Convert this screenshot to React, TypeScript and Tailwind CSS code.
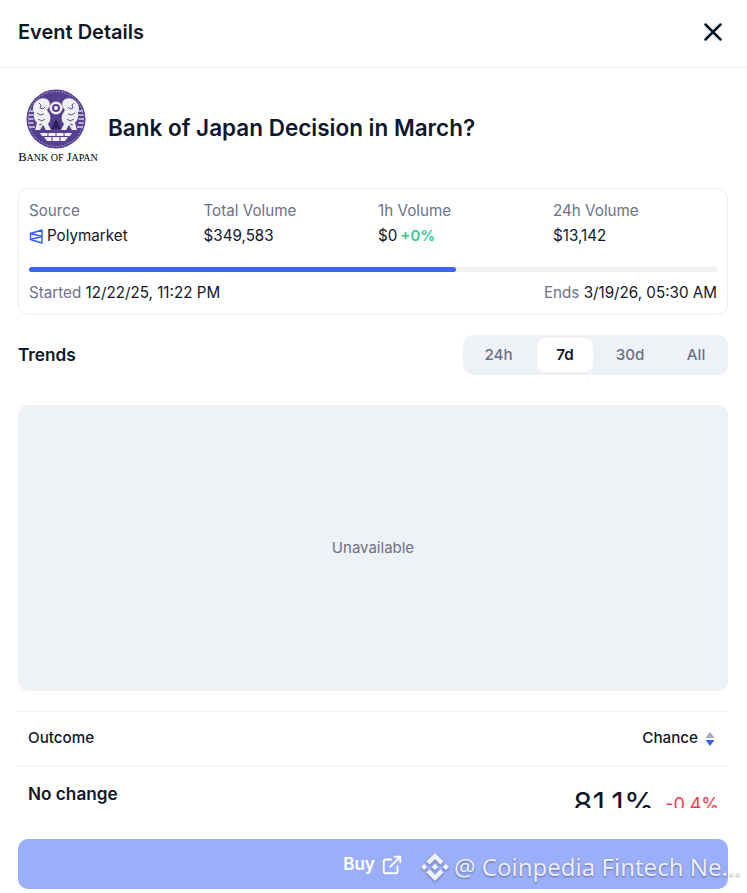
import { ExternalLink, X } from 'lucide-react';

const stats = [
    { label: 'Total Volume', value: '$349,583' },
    { label: '1h Volume', value: '$0', change: '+0%' },
    { label: '24h Volume', value: '$13,142' },
];

const ranges = [
    { label: '24h', width: 'w-[71px] pr-[6px]' },
    { label: '7d', width: 'w-[56px]' },
    { label: '30d', width: 'w-[76px] pr-[2px]' },
    { label: 'All', width: 'flex-1 pr-[2px]' },
];

const BojLogo = () => (
    <div className="w-[80px] h-[80px] flex flex-col items-center shrink-0">
        <svg viewBox="0 0 60 60" className="w-[60px] h-[60px] mt-px mr-[4px]">
            <circle cx="30" cy="30" r="29.5" fill="#54408f" />
            <circle cx="30" cy="30" r="27.5" fill="none" stroke="#cfc8e0" strokeWidth="0.8" strokeDasharray="1.5 1.5" />
            <path d="M3 22h5M2.5 26h5M2.5 30h5M2.5 34h5M3 38h6M52 22h5M52.5 26h5M52.5 30h5M52.5 34h5M51 38h6" stroke="#d8d2e6" strokeWidth="1.3" />
            {/* lions */}
            <path d="M12 11c4-3 9-2 11 1 2 4 0 7-2 9l3 5c1 4 0 7-2 9l3 6h-5l-3-5-3 5h-5l2-7c-3-3-4-7-3-11-2-3-1-9 4-12z" fill="#f1eff6" />
            <path d="M48 11c-4-3-9-2-11 1-2 4 0 7 2 9l-3 5c-1 4 0 7 2 9l-3 6h5l3-5 3 5h5l-2-7c3-3 4-7 3-11 2-3 1-9-4-12z" fill="#f1eff6" />
            <path d="M13 14l2 2-1 3 3 1 2-2M11 24l3 2 4-1M12 30l4 2 3-2M13 36l3-1M48 14l-2 2 1 3-3 1-2-2M49 24l-3 2-4-1M48 30l-4 2-3-2M47 36l-3-1" stroke="#54408f" strokeWidth="0.9" fill="none" />
            {/* centre emblem */}
            <circle cx="30" cy="19" r="6.5" fill="#f1eff6" />
            <circle cx="30" cy="19" r="4" fill="#54408f" />
            <circle cx="30" cy="19" r="2" fill="#f1eff6" />
            <path d="M25 40l5-10 5 10z" fill="#2f2260" />
            {/* wall */}
            <path d="M14 44h32l-2 3H16zM18 48h24l-3 4H21z" fill="#f1eff6" />
            <path d="M22 44v3M30 44v3M38 44v3M26 48v4M34 48v4" stroke="#54408f" strokeWidth="1" />
        </svg>
        <span className="mt-[1px] text-[12.5px] leading-[14px] whitespace-nowrap text-black font-['Liberation_Serif',serif]">
            B<span className="text-[10px]">ANK OF</span> J<span className="text-[10px]">APAN</span>
        </span>
    </div>
);

const PolymarketIcon = () => (
    <svg viewBox="0 0 14 15" className="w-[14px] h-[15px]" fill="none" stroke="#2d5bff" strokeWidth="1.4">
        <path d="M13 1v13L1.5 10.5v-6zM1.5 4.5L13 7.5M1.5 10.5L13 7.5" strokeLinejoin="round" />
    </svg>
);

const BinanceIcon = () => (
    <svg viewBox="0 0 126.61 126.61" className="w-[28px] h-[28px] drop-shadow-[0_1px_1px_rgba(0,0,0,0.4)]" fill="#eef0fb">
        <path d="M38.73 53.2l24.59-24.58 24.6 24.6 14.3-14.31L63.32 0 24.42 38.9zM0 63.31l14.3-14.31 14.31 14.31-14.31 14.3zM38.73 73.41l24.59 24.59 24.6-24.6 14.31 14.29-38.9 38.91-38.91-38.88zM98 63.31l14.3-14.31 14.31 14.3-14.31 14.32zM77.83 63.3L63.32 48.78 48.81 63.28l14.51 14.5z" />
    </svg>
);

const App = () => {
    return (
        <div className="relative w-[747px] h-[893px] overflow-hidden bg-white font-['Inter',sans-serif] text-[#0f172a]">

            {/* header */}
            <div className="h-[68px] pl-[18px] pr-[19px] pb-[3px] flex items-center justify-between border-b border-[#eef0f3]">
                <h2 className="text-[20px] font-semibold">Event Details</h2>
                <X className="w-[30px] h-[30px] text-[#0f172a]" strokeWidth={2} />
            </div>

            <div className="pl-[18px] pr-[19px]">

                {/* title */}
                <div className="h-[120px] flex items-center gap-[10px]">
                    <BojLogo />
                    <h1 className="text-[22.5px] font-semibold">Bank of Japan Decision in March?</h1>
                </div>

                {/* stats card */}
                <div className="h-[127px] px-[10px] pt-[12px] border border-[#eceef2] rounded-[10px]">
                    <div className="grid grid-cols-[174.5px_174.5px_175px_1fr] text-[15.2px]">
                        <div>
                            <div className="text-[#6b7289] leading-[20px]">Source</div>
                            <div className="mt-[5px] flex items-center gap-[4px] leading-[20px]">
                                <PolymarketIcon />
                                Polymarket
                            </div>
                        </div>
                        {stats.map((stat) => (
                            <div key={stat.label}>
                                <div className="text-[#6b7289] leading-[20px]">{stat.label}</div>
                                <div className="mt-[5px] leading-[20px]">
                                    {stat.value}
                                    {stat.change && <span className="ml-[3px] font-medium text-[#22c58b]">{stat.change}</span>}
                                </div>
                            </div>
                        ))}
                    </div>
                    <div className="mt-[21px] h-[5px] rounded-full bg-[#eef0f4]">
                        <div className="w-[62.06%] h-full rounded-full bg-[#3b63f3]"></div>
                    </div>
                    <div className="mt-[11px] flex justify-between text-[15.2px] leading-[20px]">
                        <div><span className="text-[#6b7289]">Started</span> 12/22/25, 11:22 PM</div>
                        <div><span className="text-[#6b7289]">Ends</span> 3/19/26, 05:30 AM</div>
                    </div>
                </div>

                {/* trends */}
                <div className="mt-[20px] flex items-center justify-between">
                    <h3 className="pb-[1px] text-[17.2px] font-semibold">Trends</h3>
                    <div className="w-[265px] h-[40px] p-[3px] flex rounded-[10px] bg-[#eef1f5] text-[15.2px]">
                        {ranges.map((range) => (
                            <div
                                key={range.label}
                                className={range.label === '7d'
                                    ? `${range.width} flex items-center justify-center rounded-[8px] bg-white font-semibold`
                                    : `${range.width} flex items-center justify-center font-medium text-[#6b7289]`}
                            >
                                {range.label}
                            </div>
                        ))}
                    </div>
                </div>

                {/* chart placeholder */}
                <div className="mt-[30px] h-[286px] flex items-center justify-center rounded-[10px] bg-[#eef1f5] text-[15px] text-[#6b7289]">
                    Unavailable
                </div>

                {/* outcome table */}
                <div className="mt-[20px] h-[55px] pl-[10px] pr-[13px] flex items-center justify-between border-y border-[#eef0f3] text-[15.2px] font-medium">
                    <span>Outcome</span>
                    <span className="flex items-center gap-[7px]">
                        Chance
                        <svg viewBox="0 0 10 16" className="w-[10px] h-[16px] mt-[2px]">
                            <path d="M5 1l4.5 6H.5z" fill="#a3aabb" />
                            <path d="M5 15L.5 9h9z" fill="#3b63f3" />
                        </svg>
                    </span>
                </div>
                <div className="h-[42px] pl-[10px] pr-[9px] overflow-hidden flex justify-between">
                    <span className="mt-[16px] text-[17.2px] leading-[24px] font-semibold">No change</span>
                    <span className="flex items-start gap-[11px]">
                        <span className="mt-[22px] text-[31px] leading-[32px]">81.1%</span>
                        <span className="mt-[27px] text-[18px] leading-[24px] text-[#f6384f]">-0.4%</span>
                    </span>
                </div>
            </div>

            {/* buy button */}
            <div className="absolute left-[18px] top-[839px] w-[710px] h-[50px] pt-[1px] flex items-center justify-center gap-[6px] rounded-[10px] bg-[#9aaefa] text-white text-[17px] font-semibold">
                Buy
                <ExternalLink className="w-[22px] h-[22px]" strokeWidth={2} />
            </div>

            {/* watermark */}
            <div className="absolute left-[421px] top-[852px] w-[326px] h-[30px] flex items-center gap-[5px] text-[#e9ecfb] text-[24px] font-['Noto_Sans',sans-serif] [text-shadow:0_1px_2px_rgba(0,0,0,0.4)]">
                <BinanceIcon />
                <span className="whitespace-nowrap">@ Coinpedia Fintech Ne...</span>
            </div>
        </div>
    )
}

export default App
